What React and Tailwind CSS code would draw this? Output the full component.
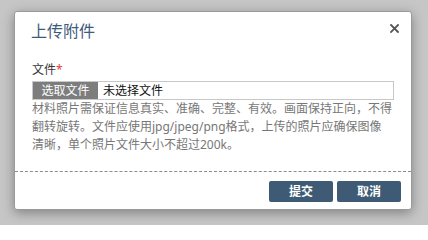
import React from 'react';

const font = { fontFamily: '"Noto Sans", "Noto Sans CJK SC", sans-serif' };

const UploadDialog = () => {
  return (
    <div className="relative ml-[14px] mt-[11px] w-[398px] h-[199px] bg-white rounded-[3px] border border-[#9a9a9a] shadow-[0_3px_12px_rgba(0,0,0,0.35)]">
      <div className="flex items-center justify-between pt-[7px] pl-[16px] pr-[11px] h-[30px]">
        <h3 className="text-[16px] leading-[22px] text-[#3f5b7a]">上传附件</h3>
        <button className="w-[12px] h-[12px] flex items-center justify-center -mt-[4px]">
          <svg width="9" height="9" viewBox="0 0 9 9">
            <path d="M1 1 L8 8 M8 1 L1 8" stroke="#555" strokeWidth="1.8" strokeLinecap="square" />
          </svg>
        </button>
      </div>

      <div className="px-[17px]">
        <div className="mt-[19px] text-[12px] leading-[18px] text-[#333]">
          文件<span className="text-[#e03b3b]">*</span>
        </div>
        <div className="mt-[2px] h-[19px] w-[362px] flex items-stretch border border-[#c8c8c8]">
          <span className="w-[65px] bg-[#7d7d7d] text-white text-[12px] leading-[17px] text-center">选取文件</span>
          <span className="pl-[5px] text-[12px] leading-[17px] text-[#111]">未选择文件</span>
        </div>
        <p className="text-[12px] leading-[18px] text-[#777] tracking-[0px]">
          材料照片需保证信息真实、准确、完整、有效。画面保持正向，不得<br />
          翻转旋转。文件应使用jpg/jpeg/png格式，上传的照片应确保图像<br />
          清晰，单个照片文件大小不超过200k。
        </p>
      </div>

      <div className="mt-[17px] border-t border-dashed border-[#8c8c8c] flex justify-end gap-[4px] pt-[9px] pr-[10px]">
        <button className="w-[64px] h-[21px] rounded-[2px] bg-[#3e5a75] text-white text-[12px] leading-[21px] font-bold">提交</button>
        <button className="w-[64px] h-[21px] rounded-[2px] bg-[#3e5a75] text-white text-[12px] leading-[21px] font-bold">取消</button>
      </div>
    </div>
  );
};

export default function App() {
  return (
    <div className="w-[428px] h-[225px] overflow-hidden bg-[#c6c6c6]" style={font}>
      <UploadDialog />
    </div>
  );
}
